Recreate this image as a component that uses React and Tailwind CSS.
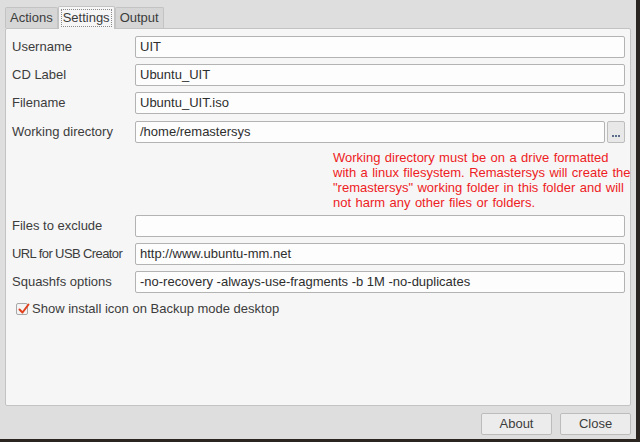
import React from 'react';

const font = { fontFamily: '"Liberation Sans", Arial, sans-serif' };

const Field = ({ label, value, children }) => (
  <div className="flex items-center h-[22px]">
    <div className="w-[123px] text-[13px] text-[#3c3c3c] whitespace-nowrap">{label}</div>
    <div className="flex-1 flex h-full gap-[2px]">
      <div className="flex-1 h-full border border-[#b3b3b3] rounded-[2px] bg-[#fdfdfd] px-[4px] flex items-center text-[13px] text-[#2e2e2e] whitespace-nowrap overflow-hidden">
        {value}
      </div>
      {children}
    </div>
  </div>
);

const Tab = ({ label, active }) =>
  active ? (
    <div className="relative z-10 h-[23px] -mb-[1px] px-[2px] pt-[2px] bg-[#f6f6f6] border border-b-0 border-[#c3c3c3] rounded-t-[2px]">
      <div className="h-[18px] px-[1px] flex items-center border border-dotted border-[#8a8a8a] text-[13px] text-[#3c3c3c]">
        {label}
      </div>
    </div>
  ) : (
    <div className="h-[21px] mt-[1px] px-[4px] flex items-center bg-[#d6d6d6] border border-b-0 border-[#c3c3c3] rounded-t-[2px] text-[13px] text-[#3c3c3c]">
      {label}
    </div>
  );

const Button = ({ label }) => (
  <div className="w-[71px] h-[22px] flex items-center justify-center bg-[#ececec] border border-[#bcbcbc] rounded-[2px] text-[13px] text-[#3c3c3c]">
    {label}
  </div>
);

export default function App() {
  return (
    <div className="w-[640px] h-[442px] flex bg-[#2b2521]" style={font}>
      <div className="w-[636px] h-[439px] bg-[#dedede] flex flex-col px-[5px] pt-[6px]">
        {/* tab strip */}
        <div className="flex items-end h-[22px]">
          <Tab label="Actions" />
          <Tab label="Settings" active />
          <Tab label="Output" />
        </div>

        {/* settings page */}
        <div className="w-[626px] h-[378px] bg-[#f6f6f6] border border-[#c3c3c3] rounded-[2px] pl-[6px] pr-[5px] pt-[7px] flex flex-col">
          <div className="flex flex-col gap-[6px]">
            <Field label="Username" value="UIT" />
            <Field label="CD Label" value="Ubuntu_UIT" />
            <Field label="Filename" value="Ubuntu_UIT.iso" />
            <div className="mt-[1px]">
              <Field label="Working directory" value="/home/remastersys">
                <div className="w-[18px] h-full bg-[#e8e8e8] border border-[#bdbdbd] rounded-[2px] flex items-end justify-center pb-[5px] gap-[1px]">
                  <span className="w-[2px] h-[2px] bg-[#5a6e8c]" />
                  <span className="w-[2px] h-[2px] bg-[#5a6e8c]" />
                  <span className="w-[2px] h-[2px] bg-[#5a6e8c]" />
                </div>
              </Field>
            </div>
          </div>

          <div className="pl-[321px] pt-[7px] text-[13px] leading-[15px] text-[#ee1c24] whitespace-nowrap [word-spacing:0.8px]">
            Working directory must be on a drive formatted
            <br />
            with a linux filesystem. Remastersys will create the
            <br />
            "remastersys" working folder in this folder and will
            <br />
            not harm any other files or folders.
          </div>

          <div className="flex flex-col gap-[6px] mt-[5px]">
            <Field label="Files to exclude" value="" />
            <Field label={<span className="tracking-[-0.6px]">URL for USB Creator</span>} value="http://www.ubuntu-mm.net" />
            <Field label="Squashfs options" value="-no-recovery -always-use-fragments -b 1M -no-duplicates" />
          </div>

          <div className="flex items-center gap-[4px] mt-[6px] pl-[4px]">
            <div className="w-[12px] h-[12px] border border-[#a8a8a8] rounded-[2px] bg-[#f4f4f4] relative">
              <svg viewBox="0 0 12 12" className="absolute -top-[1px] left-0 w-[13px] h-[12px]">
                <path d="M2 6.5 L5 9.5 L11 1.5" fill="none" stroke="#e0401c" strokeWidth="2" strokeLinecap="round" strokeLinejoin="round" />
              </svg>
            </div>
            <span className="text-[13px] text-[#3c3c3c]">Show install icon on Backup mode desktop</span>
          </div>
        </div>

        {/* dialog buttons */}
        <div className="flex justify-end gap-[8px] mt-[7px]">
          <Button label="About" />
          <Button label="Close" />
        </div>
      </div>
    </div>
  );
}
